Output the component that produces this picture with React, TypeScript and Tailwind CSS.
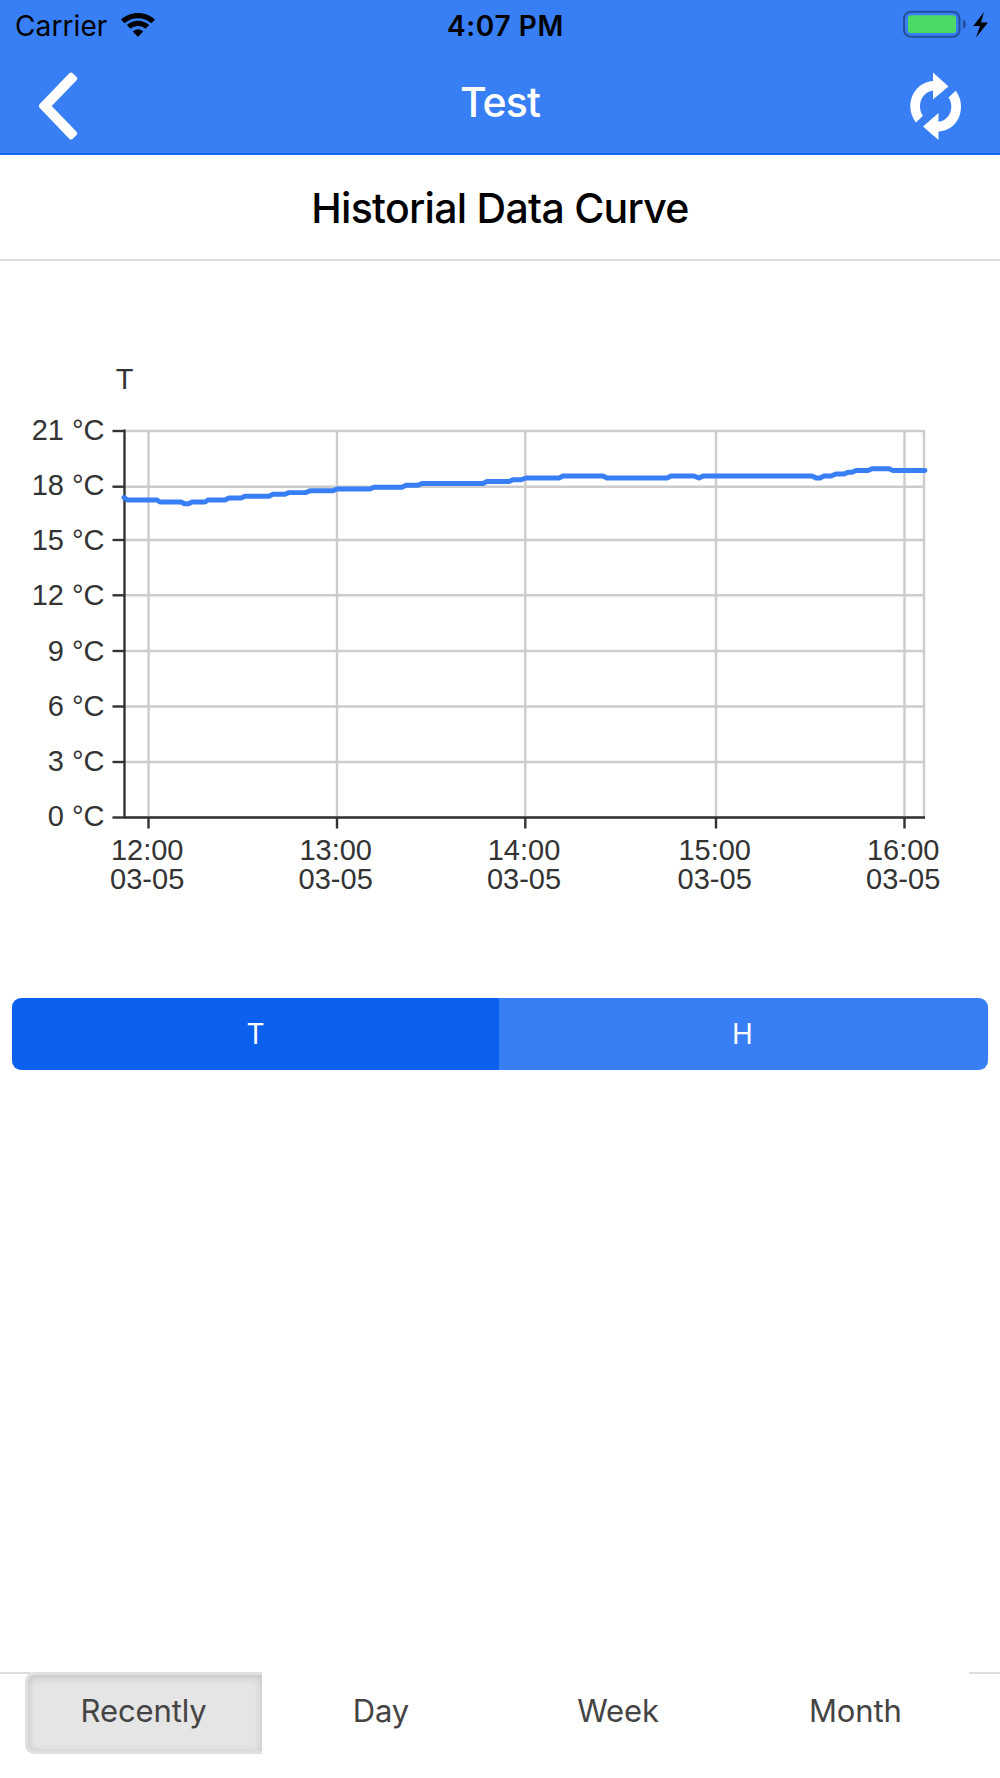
interface AxisLabel {
  text: string;
  pos: number;
}

const yLabels: AxisLabel[] = [
  { text: "21 °C", pos: 431 },
  { text: "18 °C", pos: 486.7 },
  { text: "15 °C", pos: 540 },
  { text: "12 °C", pos: 595.3 },
  { text: "9 °C", pos: 651 },
  { text: "6 °C", pos: 706.5 },
  { text: "3 °C", pos: 762 },
  { text: "0 °C", pos: 817.5 },
];

const xLabels: AxisLabel[] = [
  { text: "12:00", pos: 148.5 },
  { text: "13:00", pos: 337 },
  { text: "14:00", pos: 525.3 },
  { text: "15:00", pos: 716 },
  { text: "16:00", pos: 904.5 },
];

const temperature =
  "124,497.5 127.5,500 157,500 160,502 181,502 184.5,503.8 188.5,503.8 192,502 205,502 208,500 225,500 229,498 241,498 245,496.2 269,496.2 273,494.3 285,494.3 289,492.6 306,492.6 310,490.8 333,490.8 337,489 370,489 374,487.2 402,487.2 406,485.3 418,485.3 422,483.5 483,483.5 487,481.5 509,481.5 513,479.7 521,479.7 526,478 559,478 563,476 603,476 607,478 667,478 671,476 694,476 699,478 703,476 812,476 816,478 820,478 824,476 831,476 836,474 844,474 848,472.2 852,472.2 856,470.5 868,470.5 872,468.8 889,468.8 893,470.5 925,470.5";

const ranges = ["Recently", "Day", "Week", "Month"];

const StatusBar = () => (
  <div className="grid h-[50px] grid-cols-3 items-center text-black">
    <div className="flex items-center pt-[1px] pl-[15px]">
      <span className="text-[28px] leading-none tracking-[0.1px]">Carrier</span>
      <svg className="-mt-[2px] ml-[14px]" width="34" height="24" viewBox="0 0 34 24">
        <path d="M17 0C10.500 0 4.600 2.400 0 6.500L3.600 10.300C7.200 7.100 11.900 5.200 17 5.200S26.800 7.100 30.400 10.300L34 6.500C29.400 2.400 23.500 0 17 0Z" />
        <path d="M17 7.800C12.700 7.800 8.800 9.500 5.800 12.100L9.500 15.800C11.500 14 14.100 13 17 13S22.500 14 24.500 15.800L28.200 12.100C25.200 9.500 21.300 7.800 17 7.800Z" />
        <path d="M17 16.300C15 16.300 13.100 17.300 11.800 18.600L17 24L22.200 18.600C20.900 17.300 19 16.300 17 16.300Z" />
      </svg>
    </div>
    <span className="pt-[2px] pl-[11px] text-center text-[28px] leading-none font-semibold tracking-[0.6px]">
      4:07 PM
    </span>
    <svg className="justify-self-end" width="100" height="50" viewBox="0 0 100 50">
      <rect x="4" y="11.800" width="55.500" height="25" rx="7" fill="none" stroke="#244f99" strokeWidth="2" />
      <rect x="8" y="15.300" width="48" height="17.800" rx="3" fill="#4cd964" />
      <path d="M63 19.500C67 21 67 27.500 63 29Z" fill="#244f99" />
      <path d="M84 12L73.300 26H80L76 37.500L88 22.500H81Z" fill="#000" />
    </svg>
  </div>
);

const NavBar = () => (
  <div className="flex h-[103px] items-center justify-between px-[38px]">
    <svg width="41" height="70" viewBox="0 0 41 70" className="mt-[9px]">
      <path
        d="M31.500 2Q33 .8 34.500 2L38.800 6.200Q40 7.500 38.800 9L13.700 35L38.800 61Q40 62.500 38.800 63.800L34.500 68Q33 69.200 31.500 68L1.500 36.800Q.2 35 1.500 33.200Z"
        fill="#fff"
      />
    </svg>
    <h1 className="ml-[11px] pt-[2px] text-[41px] leading-none font-medium tracking-[-0.9px] text-white">Test</h1>
    <svg width="52" height="68" viewBox="910 72 52 68" className="mt-[9px]">
      <path
        d="M933 72.500L948.500 86.500L933 99.500V90.500C925.500 91.500 920 98 920 106.500C920 110 921 113 923 115.800L916 122.500C912.500 118 910.300 112.500 910.300 106.500C910.300 92.500 920 82 933 81Z"
        fill="#fff"
      />
      <path
        d="M938.500 140L923 126.500L938.500 113V121.800C946 121 951.300 114.500 951.300 106.500C951.300 103 950.500 100 948.500 97.500L955.700 90.800C959 95 961 100.500 961 106.500C961 120.500 951.500 131 938.500 131.500Z"
        fill="#fff"
      />
    </svg>
  </div>
);

const Chart = () => (
  <svg
    width="1000"
    height="737"
    viewBox="0 261 1000 737"
    fill="#333"
    className="block shrink-0 font-['Liberation_Sans',sans-serif] text-[29px]"
  >
    <text x="124.500" y="388.500" textAnchor="middle">T</text>
    <g stroke="#ccc" strokeWidth="2.400">
      {yLabels.map((label) => (
        <line key={label.text} x1="125" x2="924" y1={label.pos} y2={label.pos} />
      ))}
      {xLabels.map((label) => (
        <line key={label.text} x1={label.pos} x2={label.pos} y1="431" y2="817" />
      ))}
      <line x1="924" x2="924" y1="430" y2="817" />
    </g>
    <g stroke="#333" strokeWidth="2.400">
      <line x1="124.500" x2="124.500" y1="429.500" y2="818" />
      <line x1="124.500" x2="925" y1="817.500" y2="817.500" />
      {yLabels.map((label) => (
        <line key={label.text} x1="112.500" x2="125" y1={label.pos} y2={label.pos} />
      ))}
      {xLabels.map((label) => (
        <line key={label.text} x1={label.pos} x2={label.pos} y1="817" y2="828.500" />
      ))}
    </g>
    {yLabels.map((label, i) => (
      <text key={label.text} x="104.500" y={439.7 + i * 55.25} textAnchor="end">
        {label.text}
      </text>
    ))}
    {xLabels.map((label) => (
      <g key={label.text} textAnchor="middle">
        <text x={label.pos - 1.3} y="859.700">{label.text}</text>
        <text x={label.pos - 1.3} y="889">03-05</text>
      </g>
    ))}
    <polyline
      points={temperature}
      fill="none"
      stroke="#387ef5"
      strokeWidth="4.900"
      strokeLinejoin="round"
      strokeLinecap="round"
    />
  </svg>
);

const RangeTabs = () => (
  <div className="flex h-[106px]">
    <div className="-mr-[6px] w-[31px] border-t-2 border-[#ddd]"></div>
    <div className="grid h-[82px] w-[949px] grid-cols-4 text-[31px] tracking-[-0.1px] text-[#444]">
      {ranges.map((range, i) => (
        <button
          key={range}
          className={
            i === 0
              ? "rounded-l-[9px] border-3 border-r-0 border-[#e0e0e0] bg-[#e5e5e5] pr-[3px] pb-1 shadow-[inset_0_2px_8px_rgba(0,0,0,0.16)]"
              : "pb-1"
          }
        >
          {range}
        </button>
      ))}
    </div>
    <div className="-ml-[5px] flex-1 border-t-2 border-[#ddd]"></div>
  </div>
);

const App = () => {
  return (
    <div className="flex h-[1778px] w-[1000px] flex-col overflow-hidden bg-white font-['Inter',sans-serif]">
      <header className="h-[155px] shrink-0 border-b-2 border-[#1765ef] bg-[#387ef5]">
        <StatusBar />
        <NavBar />
      </header>
      <h2 className="flex h-[106px] shrink-0 items-center justify-center border-b-2 border-[#ddd] pt-[3px] text-[41px] font-medium tracking-[-0.72px] text-black">
        Historial Data Curve
      </h2>
      <Chart />
      <div className="mx-3 grid h-[72px] shrink-0 grid-cols-[487px_1fr] overflow-hidden rounded-[9px] text-[28px] text-white">
        <button className="bg-[#0c60ee]">T</button>
        <button className="bg-[#387ef5] pr-[2px]">H</button>
      </div>
      <div className="flex-1"></div>
      <RangeTabs />
    </div>
  );
};

export default App;
